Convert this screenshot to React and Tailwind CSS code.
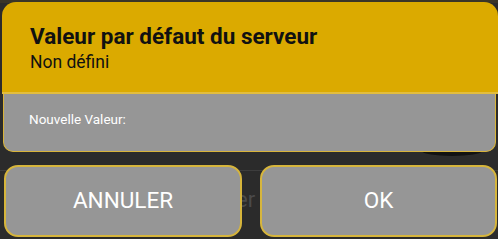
export default function App() {
  return (
    <div
      className="relative w-[498px] h-[239px] bg-[#2b2b2b] overflow-hidden"
      style={{ fontFamily: "Roboto, 'Liberation Sans', sans-serif" }}
    >
      {/* underlying screen, partly visible */}
      <div className="absolute left-0 right-0 top-0 h-[3px] bg-[#3a3528]" />
      <div className="absolute left-0 right-0 top-[170px] h-px bg-[#3d3d3d]" />
      <div className="absolute left-[236px] top-[183px] text-[22px] text-[#4a4a4a]">er</div>
      <div className="absolute left-[422px] top-[146px] w-[60px] h-[10px] rounded-[50%] bg-[#111]" />

      <div className="relative flex flex-col h-full">
        {/* dialog */}
        <div className="ml-[2px] mt-[2px] w-[496px] flex flex-col">
          <div className="h-[90px] bg-[#dbaa00] rounded-t-[14px] px-[28px] pt-[20px]">
            <h1 className="text-[22.5px] font-bold text-[#111] leading-[28px]">Valeur par défaut du serveur</h1>
            <p className="text-[17.5px] text-[#111] leading-[22px] mt-[1px]">Non défini</p>
          </div>
          <div className="h-[2px] bg-[#e2bd3e]" />
          <div className="h-[58px] ml-px mr-[2px] bg-[#969696] border border-t-0 border-[#d9b43a] rounded-b-[10px] px-[25px] pt-[13px]">
            <span className="text-[13.5px] text-white">Nouvelle Valeur:</span>
          </div>
        </div>

        {/* buttons */}
        <div className="flex justify-between px-[4px] pr-px mt-[13px]">
          <button className="w-[238px] h-[72px] bg-[#969696] border-2 border-[#d6b53c] rounded-[14px] text-[22.5px] text-white">
            ANNULER
          </button>
          <button className="w-[237px] h-[72px] bg-[#969696] border-2 border-[#d6b53c] rounded-[14px] text-[22.5px] text-white">
            OK
          </button>
        </div>
      </div>
    </div>
  );
}
